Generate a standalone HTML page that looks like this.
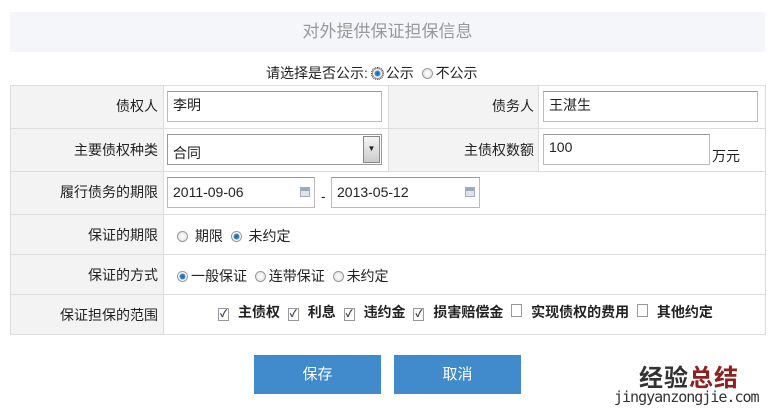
<!DOCTYPE html>
<html><head><meta charset="utf-8"><style>
*{box-sizing:border-box;margin:0;padding:0}
body{width:770px;height:412px;background:#fff;font-family:"Liberation Sans","Noto Sans CJK SC",sans-serif;font-size:14px;color:#222;position:relative;overflow:hidden}
.a{position:absolute}
.title{left:10px;top:12px;width:755px;height:40px;background:#f4f6f9;color:#999;font-size:17px;text-align:center;line-height:40px}
.lab{background:#f3f3f3}
.in{position:absolute;border:1px solid #bbb;background:#fff;padding-left:5px;font-size:14px;border-top-color:#999}
.rad{display:inline-block;width:11px;height:11px;border-radius:50%;border:1px solid #999;background:radial-gradient(#fff,#ddd);vertical-align:-1px;margin-right:3px}
.rad.on{background:radial-gradient(#1b5c9e 0,#3d8bd0 2.5px,#fff 3.5px)}
.cb{display:inline-block;width:11px;height:13px;border:1px solid #999;background:#fff;vertical-align:0px;margin-right:9px;font-size:10px;line-height:11px;text-align:center;color:#335}
.btn{position:absolute;top:355px;width:127px;height:39px;background:#418acb;color:#fff;text-align:center;line-height:39px;font-size:15px}
.cal{position:absolute;width:10px;height:10px;background:linear-gradient(#9ab 0 3px,#dde4ee 3px);border:1px solid #aab}
</style></head><body>
<div class="a title">对外提供保证担保信息</div>
<div class="a" style="left:266px;top:63px;font-size:14px">请选择是否公示: <span class="rad on" style="outline:1px dotted #333"></span>公示 &nbsp;<span class="rad"></span>不公示</div>

<div class="a" style="left:10px;top:85px;width:756px;height:250px;border:1px solid #ddd"></div>
<div class="a lab" style="left:11px;top:86px;width:152px;height:248px"></div>
<div class="a lab" style="left:388px;top:86px;width:150px;height:85px"></div>
<div class="a" style="left:163px;top:85px;width:1px;height:250px;background:#ddd"></div>
<div class="a" style="left:388px;top:85px;width:1px;height:86px;background:#ddd"></div>
<div class="a" style="left:538px;top:85px;width:1px;height:86px;background:#ddd"></div>
<div class="a" style="left:10px;top:128px;width:756px;height:1px;background:#ddd"></div>
<div class="a" style="left:10px;top:171px;width:756px;height:1px;background:#ddd"></div>
<div class="a" style="left:10px;top:214px;width:756px;height:1px;background:#ddd"></div>
<div class="a" style="left:10px;top:254px;width:756px;height:1px;background:#ddd"></div>
<div class="a" style="left:10px;top:294px;width:756px;height:1px;background:#ddd"></div>

<div class="a" style="right:612px;top:96px">债权人</div>
<div class="a" style="right:236px;top:96px">债务人</div>
<div class="a" style="right:612px;top:140px">主要债权种类</div>
<div class="a" style="right:236px;top:140px">主债权数额</div>
<div class="a" style="right:612px;top:182px">履行债务的期限</div>
<div class="a" style="right:612px;top:225px">保证的期限</div>
<div class="a" style="right:612px;top:265px">保证的方式</div>
<div class="a" style="right:612px;top:305px">保证担保的范围</div>

<div class="in" style="left:167px;top:91px;width:215px;height:31px;line-height:27px">李明</div>
<div class="in" style="left:543px;top:91px;width:215px;height:31px;line-height:27px">王湛生</div>
<div class="in" style="left:167px;top:134px;width:215px;height:31px;line-height:36px;border-color:#999">合同</div>
<div class="a" style="left:363px;top:136px;width:17px;height:27px;border:1px solid #888;background:linear-gradient(#f4f4f4,#ccc);font-size:8px;text-align:center;line-height:24px">▼</div>
<div class="in" style="left:543px;top:134px;width:167px;height:31px;line-height:25px">100</div>
<div class="a" style="left:712px;top:146px">万元</div>
<div class="in" style="left:167px;top:177px;width:148px;height:31px;line-height:29px">2011-09-06</div>
<div class="cal" style="left:300px;top:187px"></div>
<div class="a" style="left:321px;top:188px">-</div>
<div class="in" style="left:331px;top:177px;width:149px;height:31px;line-height:29px">2013-05-12</div>
<div class="cal" style="left:465px;top:187px"></div>

<div class="a" style="left:177px;top:226px"><span class="rad"></span> 期限 &nbsp;<span class="rad on"></span> 未约定</div>
<div class="a" style="left:177px;top:266px"><span class="rad on"></span>一般保证 &nbsp;<span class="rad"></span>连带保证 &nbsp;<span class="rad"></span>未约定</div>
<div class="a" style="left:218px;top:302px;font-weight:bold;font-size:14px"><span class="cb">✓</span>主债权&nbsp; <span class="cb">✓</span>利息&nbsp; <span class="cb">✓</span>违约金&nbsp; <span class="cb">✓</span>损害赔偿金&nbsp; <span class="cb"></span>实现债权的费用&nbsp; <span class="cb"></span>其他约定</div>

<div class="btn" style="left:254px">保存</div>
<div class="btn" style="left:394px">取消</div>
<div class="a" style="left:639px;top:358px;font-size:24px;font-weight:bold;color:#333;letter-spacing:1px">经验<span style="color:#8b2020">总结</span></div>
<div class="a" style="left:614px;top:388px;font-size:15px;color:#333;font-family:'DejaVu Sans Mono',monospace;letter-spacing:-1px">jingyanzongjie.com</div>
</body></html>
